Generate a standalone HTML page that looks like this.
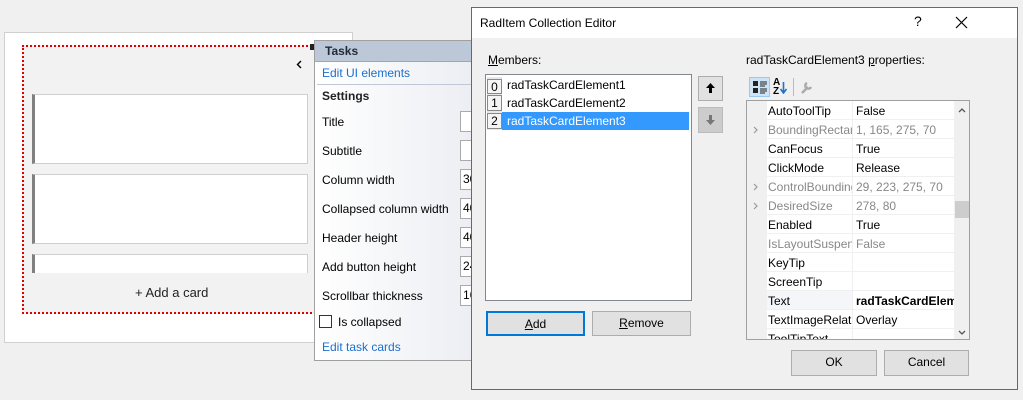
<!DOCTYPE html>
<html><head><style>
*{margin:0;padding:0;box-sizing:border-box}
body{width:1023px;height:400px;background:#f0f0f0;font-family:"Liberation Sans",sans-serif;font-size:12px;color:#000;position:relative;overflow:hidden}
.a{position:absolute}
.t{position:absolute;white-space:nowrap;line-height:14px}
.card{position:absolute;left:32px;width:276px;background:#fff;border:1px solid #cfcfcf;border-left:3px solid #808080}
.tb{position:absolute;left:460px;width:20px;height:21px;background:#fff;border:1px solid #aaa;font-size:12px;padding:2px 0 0 2px;overflow:hidden}
.row{position:absolute;left:20px;width:187px;height:19px;border-bottom:1px solid #f0f0f0}
.n{position:absolute;left:1px;width:84px;top:3px;white-space:nowrap;overflow:hidden}
.v{position:absolute;left:85px;top:0;height:18px;width:102px;padding:3px 0 0 3px;border-left:1px solid #f0f0f0;white-space:nowrap;overflow:hidden}
.g{color:#888}
.btn{position:absolute;background:#e1e1e1;border:1px solid #adadad;text-align:center;line-height:22px}
</style></head><body>
<div class="a" style="left:4px;top:32px;width:349px;height:311px;background:#fff;border:1px solid #d0d0d0"></div>
<div class="a" style="left:22px;top:45px;width:294px;height:269px;background:#f2f2f2;border:2px dotted #e00000"></div>
<svg class="a" style="left:296px;top:60px" width="6" height="9"><path d="M5 1L1.5 4.5L5 8" stroke="#000" stroke-width="1.4" fill="none"/></svg>
<div class="card" style="top:94px;height:70px"></div>
<div class="card" style="top:174px;height:70px"></div>
<div class="card" style="top:254px;height:19px;border-bottom:none"></div>
<div class="t" style="left:135px;top:286px;font-size:13px;color:#222">+ Add a card</div>
<div class="a" style="left:310px;top:44px;width:6px;height:6px;background:#222"></div>
<div class="a" style="left:314px;top:40px;width:160px;height:321px;border:1px solid #a0a0a0;background:linear-gradient(90deg,#fff,#eceef3)"></div>
<div class="a" style="left:315px;top:41px;width:158px;height:21px;background:#bcc7d8;border-bottom:1px solid #9aa7bb"></div>
<div class="t" style="left:325px;top:44px;font-weight:bold;color:#1e2a3a">Tasks</div>
<div class="t" style="left:322px;top:66px;color:#1a6fd0">Edit UI elements</div>
<div class="a" style="left:317px;top:84px;width:156px;height:1px;background:#c0c8d8"></div>
<div class="t" style="left:322px;top:89px;font-weight:bold;color:#222">Settings</div>
<div class="t" style="left:322px;top:115px">Title</div>
<div class="t" style="left:322px;top:144px">Subtitle</div>
<div class="t" style="left:322px;top:173px">Column width</div>
<div class="t" style="left:322px;top:202px">Collapsed column width</div>
<div class="t" style="left:322px;top:231px">Header height</div>
<div class="t" style="left:322px;top:260px">Add button height</div>
<div class="t" style="left:322px;top:289px">Scrollbar thickness</div>
<div class="tb" style="top:111px"></div>
<div class="tb" style="top:140px"></div>
<div class="tb" style="top:169px">30</div>
<div class="tb" style="top:198px">40</div>
<div class="tb" style="top:227px">40</div>
<div class="tb" style="top:256px">24</div>
<div class="tb" style="top:285px">16</div>
<div class="a" style="left:319px;top:315px;width:13px;height:13px;border:1px solid #333;background:#fff"></div>
<div class="t" style="left:338px;top:315px">Is collapsed</div>
<div class="t" style="left:322px;top:340px;color:#1a6fd0">Edit task cards</div>
<div class="a" style="left:471px;top:7px;width:547px;height:383px;background:#f0f0f0;border:1px solid #1c7ad0"></div>
<div class="a" style="left:472px;top:8px;width:545px;height:30px;background:#fff"></div>
<div class="t" style="left:480px;top:16px">RadItem Collection Editor</div>
<div class="t" style="left:914px;top:14px;font-size:14px">?</div>
<svg class="a" style="left:955px;top:16px" width="13" height="13"><path d="M1 1L12 12M12 1L1 12" stroke="#000" stroke-width="1.2"/></svg>
<div class="t" style="left:488px;top:53px"><u>M</u>embers:</div>
<div class="a" style="left:485px;top:74px;width:207px;height:227px;background:#fff;border:1px solid #828790"></div>
<div class="a" style="left:502px;top:112px;width:187px;height:18px;background:#3399ff"></div>
<div class="a" style="left:487px;top:77px;width:15px;height:53px;background:#e8e8e8"></div>
<div class="t" style="left:487px;top:79px;width:15px;height:15px;border:1px solid #888;text-align:center;background:#f4f4f4">0</div>
<div class="t" style="left:487px;top:95px;width:15px;height:16px;border:1px solid #888;text-align:center;background:#f4f4f4">1</div>
<div class="t" style="left:487px;top:113px;width:15px;height:16px;border:1px solid #888;text-align:center;background:#f4f4f4">2</div>
<div class="t" style="left:507px;top:78px">radTaskCardElement1</div>
<div class="t" style="left:507px;top:96px">radTaskCardElement2</div>
<div class="t" style="left:507px;top:114px;color:#fff">radTaskCardElement3</div>
<div class="btn" style="left:698px;top:76px;width:25px;height:25px"></div>
<svg class="a" style="left:705px;top:82px" width="11" height="12"><path d="M5.5 1L1 6H4V11H7V6H10Z" fill="#000"/></svg>
<div class="btn" style="left:698px;top:107px;width:25px;height:26px;background:#ccc;border-color:#bbb"></div>
<svg class="a" style="left:705px;top:114px" width="11" height="12"><path d="M5.5 11L1 6H4V1H7V6H10Z" fill="#777"/></svg>
<div class="btn" style="left:486px;top:311px;width:99px;height:25px;border:2px solid #0078d7"><u>A</u>dd</div>
<div class="btn" style="left:592px;top:311px;width:99px;height:25px"><u>R</u>emove</div>
<div class="t" style="left:746px;top:53px">radTaskCardElement3 <u>p</u>roperties:</div>
<div class="a" style="left:749px;top:77px;width:21px;height:20px;background:#cce4f7;border:1px solid #99c9ef"></div>
<svg class="a" style="left:752px;top:80px" width="16" height="15"><rect x="1" y="1" width="5" height="5" fill="#222"/><rect x="1" y="8" width="5" height="5" fill="#222"/><path d="M8 2h7M8 4h7M8 6h5M8 9h7M8 11h7M8 13h5" stroke="#222"/></svg>
<div class="t" style="left:773px;top:78px;font-size:10px;font-weight:bold;line-height:9px">A<br>Z</div>
<svg class="a" style="left:780px;top:82px" width="7" height="12"><path d="M3.5 0V10M0.5 7L3.5 11L6.5 7" stroke="#1e73c8" stroke-width="1.6" fill="none"/></svg>
<div class="a" style="left:793px;top:78px;width:1px;height:18px;background:#bbb"></div>
<svg class="a" style="left:800px;top:80px" width="14" height="15"><path d="M2 13L8 7M7 3a3 3 0 1 0 4 4" stroke="#aaa" stroke-width="2.4" fill="none"/></svg>
<div class="a" style="left:746px;top:100px;width:224px;height:240px;background:#fff;border:1px solid #a0a0a0;overflow:hidden">
 <div class="a" style="left:0;top:0;width:20px;height:240px;background:#f0f0f0"></div>
 <div class="row" style="top:0"><div class="n">AutoToolTip</div><div class="v">False</div></div>
 <div class="row" style="top:19px"><div class="n g">BoundingRectangle</div><div class="v g">1, 165, 275, 70</div></div>
 <div class="row" style="top:38px"><div class="n">CanFocus</div><div class="v">True</div></div>
 <div class="row" style="top:57px"><div class="n">ClickMode</div><div class="v">Release</div></div>
 <div class="row" style="top:76px"><div class="n g">ControlBoundingRectangle</div><div class="v g">29, 223, 275, 70</div></div>
 <div class="row" style="top:95px"><div class="n g">DesiredSize</div><div class="v g">278, 80</div></div>
 <div class="row" style="top:114px"><div class="n">Enabled</div><div class="v">True</div></div>
 <div class="row" style="top:133px"><div class="n g">IsLayoutSuspended</div><div class="v g">False</div></div>
 <div class="row" style="top:152px"><div class="n">KeyTip</div><div class="v"></div></div>
 <div class="row" style="top:171px"><div class="n">ScreenTip</div><div class="v"></div></div>
 <div class="row" style="top:190px;background:#f4f6fa"><div class="n">Text</div><div class="v" style="font-weight:bold;background:#fff">radTaskCardElement3</div></div>
 <div class="row" style="top:209px"><div class="n">TextImageRelation</div><div class="v">Overlay</div></div>
 <div class="row" style="top:228px"><div class="n">ToolTipText</div><div class="v"></div></div>
 <svg class="a" style="left:6px;top:25px" width="5" height="8"><path d="M1 1L4 4L1 7" stroke="#999" stroke-width="1.2" fill="none"/></svg>
 <svg class="a" style="left:6px;top:82px" width="5" height="8"><path d="M1 1L4 4L1 7" stroke="#999" stroke-width="1.2" fill="none"/></svg>
 <svg class="a" style="left:6px;top:101px" width="5" height="8"><path d="M1 1L4 4L1 7" stroke="#999" stroke-width="1.2" fill="none"/></svg>
 <div class="a" style="left:207px;top:0;width:16px;height:240px;background:#f0f0f0"></div>
 <div class="a" style="left:208px;top:100px;width:14px;height:17px;background:#cdcdcd"></div>
 <svg class="a" style="left:211px;top:7px" width="8" height="5"><path d="M1 4L4 1L7 4" stroke="#555" stroke-width="1.3" fill="none"/></svg>
 <svg class="a" style="left:211px;top:229px" width="8" height="5"><path d="M1 1L4 4L7 1" stroke="#555" stroke-width="1.3" fill="none"/></svg>
</div>
<div class="btn" style="left:791px;top:350px;width:86px;height:26px">OK</div>
<div class="btn" style="left:884px;top:350px;width:85px;height:26px">Cancel</div>
</body></html>
